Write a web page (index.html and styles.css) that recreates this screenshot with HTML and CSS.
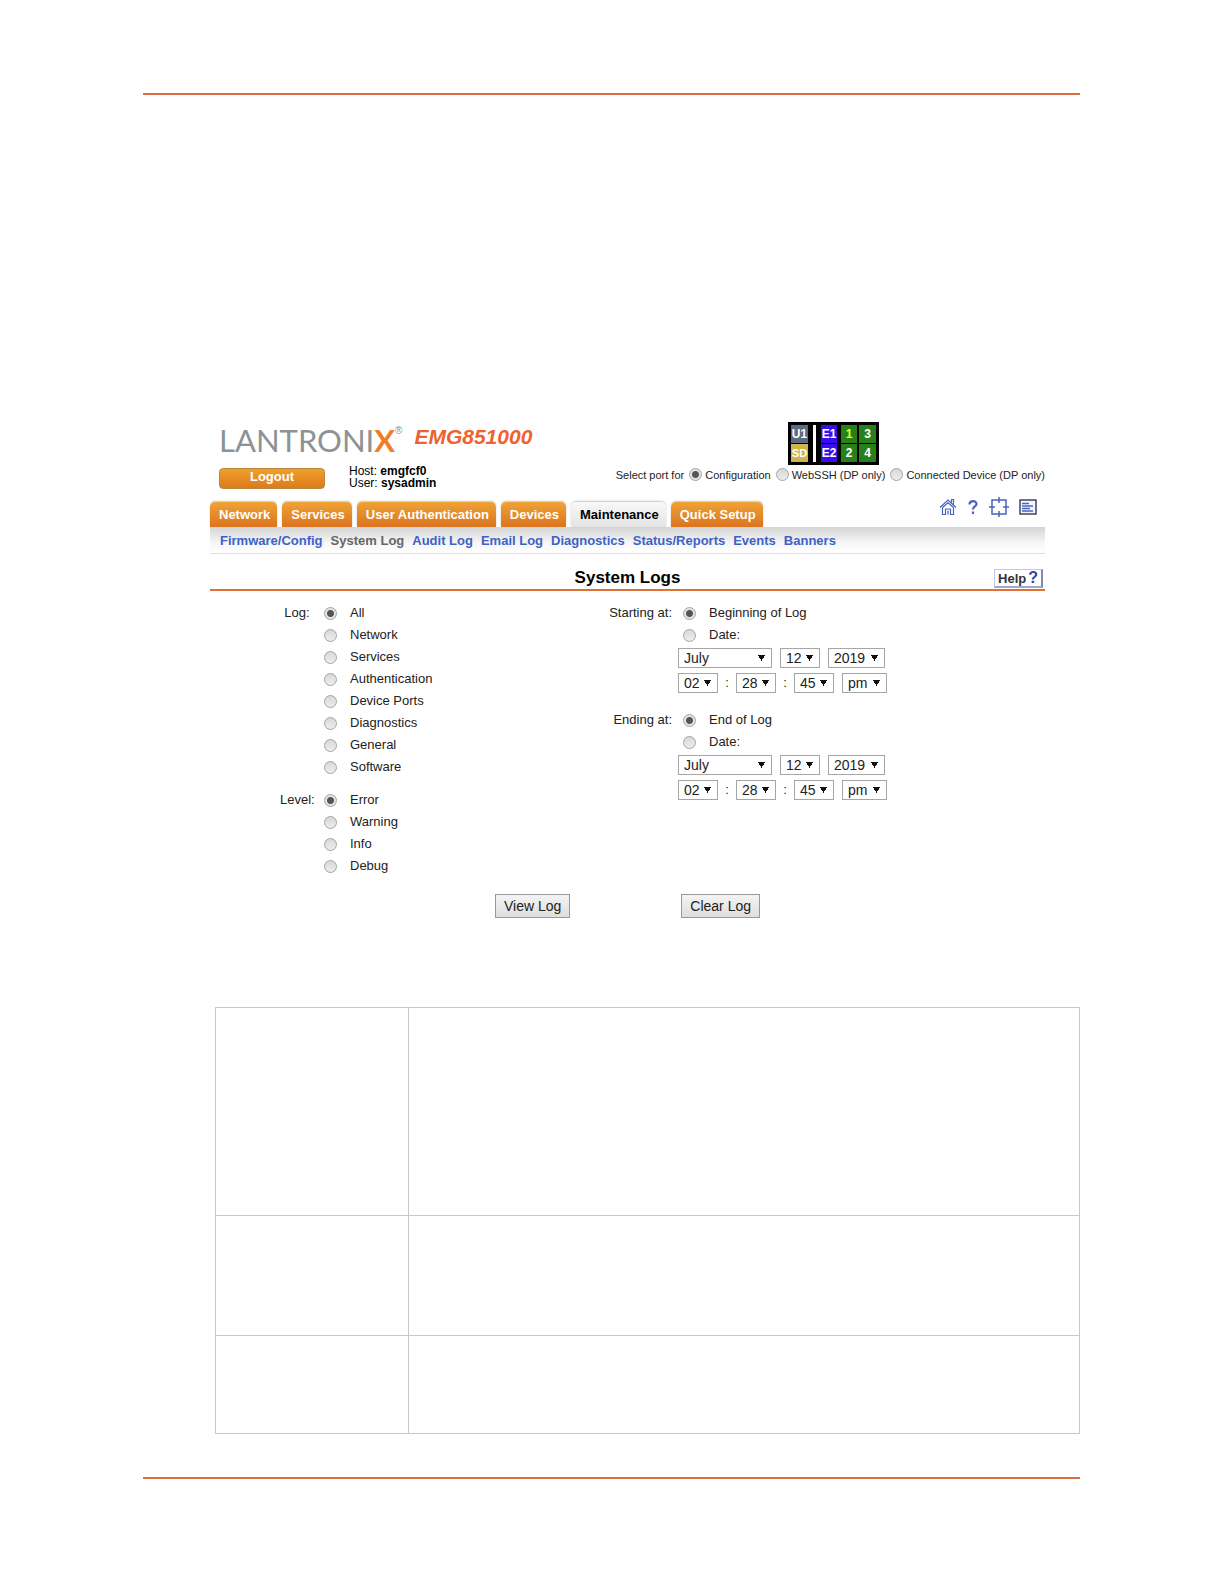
FILE: index.html
```html
<!DOCTYPE html>
<html lang="en">
<head>
    <title>System Logs</title>
    <meta charset="utf-8">
    <link rel="stylesheet" href="styles.css">
</head>
<body>
<div class="page">

    <div class="app">
        <div class="header">
            <div class="identity">
                <div class="brand">
                    <span class="logo">LANTRONI<b>X</b></span><span class="reg">®</span>
                    <span class="model">EMG851000</span>
                </div>
                <div class="session">
                    <button type="button" class="logout">Logout</button>
                    <div class="host">
                        <div>Host: <strong>emgfcf0</strong></div>
                        <div>User: <strong>sysadmin</strong></div>
                    </div>
                </div>
            </div>

            <div class="ports">
                <div class="port-map">
                    <button type="button" class="port usb">U1</button>
                    <span class="divider"></span>
                    <button type="button" class="port eth">E1</button>
                    <button type="button" class="port dev selected">1</button>
                    <button type="button" class="port dev">3</button>
                    <button type="button" class="port sd">SD</button>
                    <button type="button" class="port eth">E2</button>
                    <button type="button" class="port dev">2</button>
                    <button type="button" class="port dev">4</button>
                </div>
                <div class="port-for">
                    <span>Select port for</span>
                    <label><input type="radio" name="portfor" checked>Configuration</label>
                    <label><input type="radio" name="portfor">WebSSH (DP only)</label>
                    <label><input type="radio" name="portfor">Connected Device (DP only)</label>
                </div>
            </div>
        </div>

        <div class="tabs">
            <a href="#">Network</a>
            <a href="#">Services</a>
            <a href="#">User Authentication</a>
            <a href="#">Devices</a>
            <a href="#" class="active">Maintenance</a>
            <a href="#">Quick Setup</a>
            <div class="tools">
                <svg width="18" height="18" viewBox="0 0 18 18" fill="none" stroke="#4a63c0" stroke-width="1.200">
                    <path d="M1 9.500L9 2l8 7.500M3.500 9.500v7h3v-5.500h5v5.500h3v-7M3.500 9.500L9 4.800l5.500 4.700M12.500 4.500V1.500h2V6.500M9 12.500v4" />
                </svg>
                <svg width="12" height="18" viewBox="0 0 12 18" fill="none" stroke="#4a63c0" stroke-width="2.200">
                    <path d="M2.500 6.500c0-4.500 7-4.500 7-.500 0 2.500-3.500 2.500-3.500 5.500M6 13.500v2.500" />
                </svg>
                <svg width="20" height="20" viewBox="0 0 20 20" fill="none" stroke="#4a63c0" stroke-width="1.500">
                    <path d="M8 3H3v14h5M12 3h5v14h-5M10 0v6M8 3h4M10 14v6M8 17h4M0 10h6M14 10h6" />
                </svg>
                <svg width="18" height="16" viewBox="0 0 18 16" fill="none">
                    <rect x="1" y="1" width="16" height="14" fill="#f4f6ff" stroke="#333a4c" stroke-width="1.400" />
                    <path d="M3 4.500h7M3 7h11M3 9.500h8M3 12h11" stroke="#4a63c0" stroke-width="1.300" />
                </svg>
            </div>
        </div>

        <div class="subnav">
            <a href="#">Firmware/Config</a>
            <a href="#" class="active">System Log</a>
            <a href="#">Audit Log</a>
            <a href="#">Email Log</a>
            <a href="#">Diagnostics</a>
            <a href="#">Status/Reports</a>
            <a href="#">Events</a>
            <a href="#">Banners</a>
        </div>

        <div class="title">
            <h1>System Logs</h1>
            <button type="button" class="help">Help<b>?</b></button>
        </div>

        <form>
            <div class="options">
                <div class="filters">
                    <div class="group" role="radiogroup" aria-labelledby="log">
                        <span class="name" id="log">Log:</span>
                        <div>
                            <label><input type="radio" name="log" checked>All</label>
                            <label><input type="radio" name="log">Network</label>
                            <label><input type="radio" name="log">Services</label>
                            <label><input type="radio" name="log">Authentication</label>
                            <label><input type="radio" name="log">Device Ports</label>
                            <label><input type="radio" name="log">Diagnostics</label>
                            <label><input type="radio" name="log">General</label>
                            <label><input type="radio" name="log">Software</label>
                        </div>
                    </div>
                    <div class="group" role="radiogroup" aria-labelledby="level">
                        <span class="name" id="level">Level:</span>
                        <div>
                            <label><input type="radio" name="level" checked>Error</label>
                            <label><input type="radio" name="level">Warning</label>
                            <label><input type="radio" name="level">Info</label>
                            <label><input type="radio" name="level">Debug</label>
                        </div>
                    </div>
                </div>

                <div class="range">
                    <div class="group" role="radiogroup" aria-labelledby="start">
                        <span class="name" id="start">Starting at:</span>
                        <div>
                            <label><input type="radio" name="start" checked>Beginning of Log</label>
                            <label><input type="radio" name="start">Date:</label>
                            <div class="date">
                                <select class="month" aria-label="Start month"><option>July</option></select>
                                <select aria-label="Start day"><option>12</option></select>
                                <select class="year" aria-label="Start year"><option>2019</option></select>
                            </div>
                            <div class="time">
                                <select aria-label="Start hour"><option>02</option></select><span>:</span>
                                <select aria-label="Start minute"><option>28</option></select><span>:</span>
                                <select aria-label="Start second"><option>45</option></select>
                                <select class="half" aria-label="Start am or pm"><option>pm</option></select>
                            </div>
                        </div>
                    </div>
                    <div class="group" role="radiogroup" aria-labelledby="end">
                        <span class="name" id="end">Ending at:</span>
                        <div>
                            <label><input type="radio" name="end" checked>End of Log</label>
                            <label><input type="radio" name="end">Date:</label>
                            <div class="date">
                                <select class="month" aria-label="End month"><option>July</option></select>
                                <select aria-label="End day"><option>12</option></select>
                                <select class="year" aria-label="End year"><option>2019</option></select>
                            </div>
                            <div class="time">
                                <select aria-label="End hour"><option>02</option></select><span>:</span>
                                <select aria-label="End minute"><option>28</option></select><span>:</span>
                                <select aria-label="End second"><option>45</option></select>
                                <select class="half" aria-label="End am or pm"><option>pm</option></select>
                            </div>
                        </div>
                    </div>
                </div>
            </div>

            <div class="actions">
                <button type="button">View Log</button>
                <button type="button">Clear Log</button>
            </div>
        </form>
    </div>

    <table class="notes">
        <tr class="tall"><td></td><td></td></tr>
        <tr class="medium"><td></td><td></td></tr>
        <tr class="short"><td></td><td></td></tr>
    </table>

</div>
</body>
</html>
```
FILE: styles.css
```css
* {
    box-sizing: border-box;
}

body {
    font: 13px "Liberation Sans", Arial, sans-serif;
    color: #222;
    background-color: #fff;
    margin: 0;
}

button {
    font-family: inherit;
    padding: 0;
}

a {
    text-decoration: none;
}

.page {
    margin: 93px 144px 0 143px;
    padding-bottom: 43px;
    border-top: 2px solid #dc6d3c;
    border-bottom: 2px solid #dc6d3c;
}

.app {
    margin: 327px 35px 0 67px;
}

/* Header */

.header {
    display: flex;
    justify-content: space-between;
    height: 68px;
}

.identity {
    padding-left: 9px;
}

.brand {
    display: flex;
    height: 36px;
}

.logo {
    font: 31px/36px Lato, sans-serif;
    color: #8c9296;
}

.logo b {
    color: #f07d28;
}

.reg {
    font-size: 10px;
    line-height: 14px;
    color: #8c9296;
    padding-top: 2px;
}

.model {
    font-size: 21px;
    line-height: 30px;
    font-weight: bold;
    font-style: italic;
    color: #ec6230;
    margin-left: 12px;
}

.session {
    display: flex;
    gap: 24px;
    padding-top: 10px;
}

.logout {
    width: 106px;
    height: 21px;
    padding-bottom: 4px;
    border: 1px solid #b8883f;
    border-radius: 4px;
    background: linear-gradient(#f0a02a, #dd7a1c);
    color: #fff;
    font-size: 13px;
    font-weight: bold;
}

.host {
    color: #000;
    font-size: 12px;
    line-height: 12px;
    margin-top: -3px;
}

.ports {
    display: flex;
    flex-direction: column;
    align-items: flex-end;
}

.port-map {
    display: grid;
    grid-template-columns: 17px 9px 18px 16px 17px;
    grid-template-rows: 18px 18px;
    column-gap: 2px;
    row-gap: 1px;
    padding: 3px;
    background: #000;
    margin-right: 166px;
}

.port {
    border: 0;
    color: #fff;
    font-size: 12px;
    font-weight: bold;
}

.divider {
    grid-row: span 2;
    margin: 0 3px;
    background: #fff;
}

.usb {
    background: #5b6a85;
}

.sd {
    background: #cdb64a;
    font-size: 11px;
}

.eth {
    margin-right: 2px;
    background: #3a0cf0;
}

.dev {
    background: #28801a;
}

.port.selected {
    color: #e6ff1e;
}

.port-for {
    display: flex;
    align-items: center;
    gap: 5px;
    margin-top: 3px;
    font-size: 11px;
    white-space: nowrap;
}

.port-for label {
    display: flex;
    align-items: center;
    gap: 3px;
}

input[type="radio"] {
    appearance: none;
    width: 13px;
    height: 13px;
    margin: 0;
    border: 1px solid #a4a4a4;
    border-radius: 50%;
    background: linear-gradient(#d8d8d8, #ededed);
}

input[type="radio"]:checked {
    background: radial-gradient(circle, #555 0, #555 3px, #e4e4e4 4px);
}

/* Navigation */

.tabs {
    display: flex;
    align-items: flex-end;
    gap: 5px;
    height: 37px;
}

.tabs a {
    height: 25px;
    padding: 0 7px 0 9px;
    border-radius: 5px 5px 0 0;
    background: linear-gradient(#eea336, #dc7420);
    box-shadow: 0 -1px 2px #c9c5b8;
    color: #fff;
    font-weight: bold;
    line-height: 25px;
}

.tabs a.active {
    background: linear-gradient(#f8f8f8, #e4e4e4);
    color: #000;
}

.tools {
    display: flex;
    align-items: center;
    gap: 10px;
    margin-left: auto;
    margin-bottom: 10px;
    padding-right: 8px;
}

.subnav {
    display: flex;
    gap: 8px;
    height: 27px;
    padding-left: 10px;
    border-bottom: 1px solid #dcdfe4;
    background: linear-gradient(#d4d4d4, #f6f6f6 60%, #fff);
    line-height: 28px;
}

.subnav a {
    color: #3c62c8;
    font-weight: bold;
}

.subnav a.active {
    color: #666;
}

.title {
    position: relative;
    border-bottom: 2px solid #e0703a;
    text-align: center;
    padding-top: 12px;
}

.title h1 {
    margin: 0;
    color: #000;
    font-size: 17px;
    line-height: 23px;
}

.help {
    position: absolute;
    right: 2px;
    bottom: 1px;
    width: 49px;
    height: 19px;
    border: 1px solid #c4c8e8;
    border-right: 2px solid #8488b8;
    border-bottom: 2px solid #a4a8c8;
    background: #fff;
    color: #333;
    font-size: 13px;
    font-weight: bold;
    line-height: 16px;
}

.help b {
    color: #3c40a0;
    font-size: 16px;
    margin-left: 2px;
}

/* Form */

.options {
    display: grid;
    grid-template-columns: 331px 1fr;
    padding: 11px 0 0 70px;
    line-height: 22px;
}

.group {
    display: grid;
    gap: 10px;
    margin-bottom: 11px;
}

.filters .group {
    grid-template-columns: 34px 1fr;
}

.filters .name {
    text-align: center;
}

.range .group {
    grid-template-columns: 61px 1fr;
    gap: 6px;
    margin-bottom: 16px;
}

.range .name {
    display: flex;
    justify-content: flex-end;
    white-space: nowrap;
}

.group label {
    display: flex;
    gap: 13px;
    height: 22px;
}

.group input[type="radio"] {
    margin-top: 5px;
}

.range label {
    padding-left: 5px;
}

select {
    appearance: none;
    width: 40px;
    height: 20px;
    padding: 0 5px;
    border: 1px solid #a6a6a6;
    border-radius: 0;
    background:
        linear-gradient(to top right, transparent 50%, #111 50%) right 9px top 6px / 4px 7px no-repeat,
        linear-gradient(to top left, transparent 50%, #111 50%) right 6px top 6px / 4px 7px no-repeat,
        #fff;
    color: #222;
    font: 14px "Liberation Sans", Arial, sans-serif;
}

.month {
    width: 94px;
}

.year {
    width: 57px;
}

.half {
    width: 45px;
    margin-left: 8px;
}

.date,
.time {
    display: flex;
    height: 20px;
}

.date {
    gap: 8px;
    margin: 2px 0 5px;
}

.time span {
    width: 18px;
    text-align: center;
    line-height: 20px;
}

.actions {
    display: flex;
    justify-content: center;
    gap: 111px;
    margin-top: 6px;
}

.actions button {
    height: 24px;
    padding: 0 8px;
    border: 1px solid #999;
    background: linear-gradient(#f4f4f4, #dedede);
    color: #222;
    font-size: 14px;
}

.notes {
    width: calc(100% - 72px);
    margin: 89px 0 0 72px;
    border-collapse: collapse;
    table-layout: fixed;
}

.notes td {
    border: 1px solid #c8c8c8;
}

.notes td:first-child {
    width: 193px;
}

.tall {
    height: 208px;
}

.medium {
    height: 120px;
}

.short {
    height: 98px;
}
```
